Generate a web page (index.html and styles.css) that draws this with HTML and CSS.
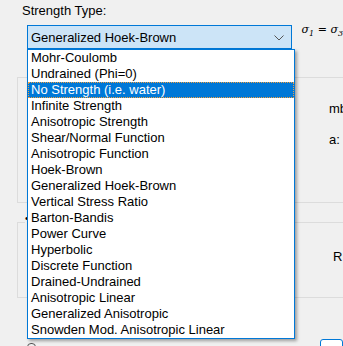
FILE: index.html
```html
<!DOCTYPE html>
<html lang="en">
<head>
    <meta charset="UTF-8">
    <title>Strength Type</title>
    <link rel="stylesheet" href="styles.css">
</head>
<body>
    <div class="dialog">
        <div class="field-label">Strength Type:</div>
        <div class="row">
            <div class="combo-wrap">
                <div class="combo">
                    <span>Generalized Hoek-Brown</span>
                    <svg class="chevron" width="10" height="6" viewBox="0 0 10 6"><polyline points="0.5,0.5 5,5 9.5,0.5" fill="none" stroke="#555" stroke-width="1"/></svg>
                </div>
                <ul class="dropdown">
                    <li>Mohr-Coulomb</li>
                    <li>Undrained (Phi=0)</li>
                    <li class="selected">No Strength (i.e. water)</li>
                    <li>Infinite Strength</li>
                    <li>Anisotropic Strength</li>
                    <li>Shear/Normal Function</li>
                    <li>Anisotropic Function</li>
                    <li>Hoek-Brown</li>
                    <li>Generalized Hoek-Brown</li>
                    <li>Vertical Stress Ratio</li>
                    <li>Barton-Bandis</li>
                    <li>Power Curve</li>
                    <li>Hyperbolic</li>
                    <li>Discrete Function</li>
                    <li>Drained-Undrained</li>
                    <li>Anisotropic Linear</li>
                    <li>Generalized Anisotropic</li>
                    <li>Snowden Mod. Anisotropic Linear</li>
                </ul>
            </div>
            <div class="formula"><i>σ<sub>1</sub></i> = <i>σ<sub>3</sub></i></div>
        </div>

        <div class="group group-params">
            <div class="params">
                <div>mb</div>
                <div>a:</div>
            </div>
        </div>

        <div class="group group-residual">
            <span class="caption">•</span>
            <div class="params">
                <div class="r-label">R</div>
            </div>
        </div>

        <div class="bottom-row">
            <span class="check"></span>
            <span class="button"></span>
        </div>
    </div>
</body>
</html>
```

FILE: styles.css
```css
body {
    margin: 0;
    background-color: #f0f0f0;
    font-family: "Liberation Sans", Arial, sans-serif;
    font-size: 13px;
    color: #000;
    overflow: hidden;
}
.dialog {
    padding-top: 3px;
    height: 343px;
}
.field-label {
    margin-left: 22px;
    line-height: 16px;
}
.row {
    display: flex;
    margin-top: 6px;
    height: 24px;
}
.combo-wrap {
    position: relative;
    margin-left: 27px;
    width: 268px;
}
.combo {
    box-sizing: border-box;
    height: 24px;
    border: 1px solid #0078d7;
    background-color: #cce4f7;
    display: flex;
    align-items: center;
    justify-content: space-between;
    padding: 0 7px 0 3px;
}
.chevron {
    margin-top: 1px;
}
.dropdown {
    position: absolute;
    top: 24px;
    left: 0;
    width: 268px;
    box-sizing: border-box;
    margin: 0;
    padding: 0;
    list-style: none;
    background: white;
    border: 1px solid #0078d7;
    box-shadow: 2px 2px 3px rgba(0, 0, 0, 0.35);
    z-index: 2;
}
.dropdown li {
    height: 16px;
    line-height: 16px;
    padding-left: 3px;
    white-space: nowrap;
}
.dropdown li.selected {
    background-color: #0078d7;
    color: white;
    outline: 1px dotted #f0a040;
    outline-offset: -1px;
}
.formula {
    margin-left: 10px;
    margin-top: -2px;
    font-family: "DejaVu Serif", serif;
    font-size: 11px;
    white-space: nowrap;
}
.formula sub {
    font-size: 8px;
}
.group {
    position: relative;
    margin-left: 17px;
    margin-right: -20px;
    border: 1px solid #dcdcdc;
    box-sizing: border-box;
}
.group-params {
    margin-top: 28px;
    height: 126px;
}
.group-residual {
    margin-top: 19px;
    height: 76px;
}
.params {
    margin-left: 311px;
    line-height: 16px;
}
.group-params .params {
    padding-top: 23px;
    display: flex;
    flex-direction: column;
    gap: 15px;
}
.group-residual .params {
    padding-top: 26px;
    margin-left: 315px;
}
.caption {
    position: absolute;
    left: 7px;
    top: -10px;
    background: #f0f0f0;
    font-size: 10px;
}
.bottom-row {
    display: flex;
    margin-top: 41px;
    margin-left: 27px;
}
.check {
    width: 16px;
    height: 14px;
    margin-top: 4px;
    border: 1px solid #555;
    border-radius: 4px;
    box-sizing: border-box;
}
.button {
    margin-left: 284px;
    width: 40px;
    height: 20px;
    border: 1px solid #0078d7;
    border-radius: 3px;
    background: white;
}
```
